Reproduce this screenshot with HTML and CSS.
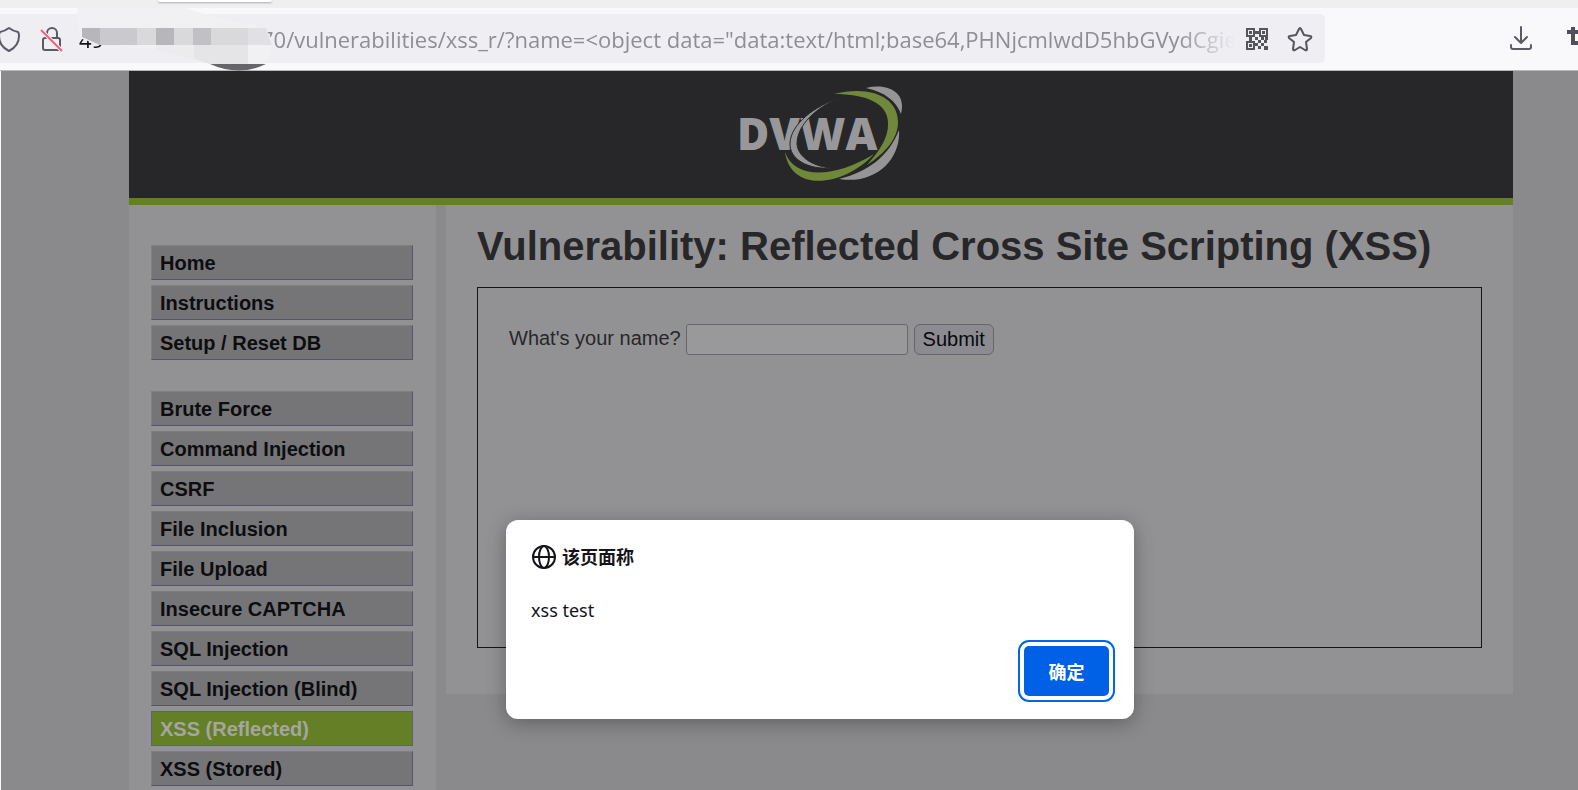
FILE: index.html
```html
<!DOCTYPE html>
<html lang="zh-CN">
<head>
<meta charset="utf-8">
<title>Vulnerability: Reflected Cross Site Scripting (XSS)</title>
<link rel="stylesheet" href="styles.css">
</head>
<body>
<div class="browser">
  <div class="tabstrip"><div class="tab"></div></div>
  <div class="toolbar">
    <div class="urlbar">
      <svg class="shield" width="22" height="26" viewBox="0 0 22 26" fill="none" stroke="#5b5b66" stroke-width="2" stroke-linejoin="round"><path d="M9 2Q13 5 18 6Q19 7 19 10Q19 20 9 25Q-1 20 -1 10Q-1 7 0 6Q5 5 9 2Z"/></svg>
      <svg class="lock" width="24" height="26" viewBox="0 0 24 26" fill="none" stroke="#5b5b66" stroke-width="2"><rect x="3" y="12" width="17" height="12" rx="2"/><path d="M7 12V7a5 5 0 0 1 10 0v5"/><path d="M1 4L22 25" stroke="#efeef3" stroke-width="4"/><path d="M1 4L22 25" stroke="#f0637d" stroke-width="2"/></svg>
      <div class="url"><span class="host">49</span><span class="path">70/vulnerabilities/xss_r/?name=&lt;object data="data:text/html;base64,PHNjcmlwdD5hbGVydCgie</span></div>
      <button class="icon" aria-label="QR code"><svg width="24" height="24" viewBox="0 0 24 24" fill="#55555c"><path fill-rule="evenodd" d="M1 1h9v9H1zM3 3v5h5V3zM14 1h9v9h-9zM16 3v5h5V3zM1 14h9v9H1zM3 16v5h5v-5z"/><path d="M4 4h3v3H4zM17 4h3v3h-3zM4 17h3v3H4zM10 4h4v3h-4zM4 10h3v4H4zM10 10h3v3h-3zM13 13h3v3h-3zM16 10h3v3h-3zM19 13h3v3h-3zM10 16h3v3h-3zM16 16h3v3h-3zM13 19h3v3h-3zM19 19h4v4h-4zM20 10h3v3h-3z"/></svg></button>
      <button class="icon" aria-label="Bookmark"><svg width="26" height="26" viewBox="0 0 26 26" fill="none" stroke="#55555c" stroke-width="2" stroke-linejoin="round"><path d="M12 3Q13 1 14 3L17 9L23 10Q25 10 24 12L19 16L20 23Q20 25 18 24L13 21L8 24Q6 25 6 23L7 16L2 12Q1 10 3 10L9 9Z"/></svg></button>
    </div>
    <div class="actions">
      <button class="icon" aria-label="Downloads"><svg width="24" height="26" viewBox="0 0 24 26" fill="none" stroke="#5b5b66" stroke-width="2" stroke-linecap="round" stroke-linejoin="round"><path d="M12 1V16M6 11L12 17L18 11M2 19V21Q2 23 4 23H20Q22 23 22 21V19"/></svg></button>
      <button class="icon crop" aria-label="Screenshot"><svg width="24" height="24" viewBox="0 0 24 24" fill="none" stroke="#50505a" stroke-width="4"><path d="M0 5H17V24M6 0V16H24"/></svg></button>
    </div>
  </div>
  <svg class="mask" width="200" height="64" viewBox="0 0 200 64">
    <path d="M134 56Q163 69 190 56Z" fill="#65656a"/>
    <path d="M2 0H110Q150 14 180 17Q196 23 196 36Q196 49 186 56H134Q110 48 78 41L24 37L6 31Q-2 14 2 0Z" fill="#f1f1f3"/>
    <path fill="#ececef" d="M80 37H118V52L80 42z"/><path fill="#e5e5e8" d="M118 37H172V56H134L118 51z"/>
    <path fill="#b7b6bb" d="M6 20H24V37L6 29zM80 20H98V37H80z"/><path fill="#c9c9ce" d="M24 20H61V37H24z"/><path fill="#d9d9dc" d="M61 20H80V37H61zM98 20H117V37H98zM135 20H172V37H135z"/><path fill="#c1c1c5" d="M117 20H135V37H117z"/><path fill="#e1e1e5" d="M172 20H190L196 37H172z"/>
  </svg>
</div>

<main class="page">
  <div class="container">
    <header class="header">
      <svg class="logo" width="166" height="96" viewBox="0 0 166 96" role="img" aria-label="DVWA">
        <text x="-1" y="64" class="logo-text">DVWA</text>
        <path d="M104 11C76 20 53 38 52 57C51 73 70 84 94 82C77 81 60 72 59 58C59 39 78 21 104 11Z" fill="#959598" stroke="#272729" stroke-width="1"/>
        <path d="M96 8C132 -1 160 11 160 36C160 53 147 67 129 79C141 65 151 52 150 36C149 17 128 8 96 8Z" fill="#71883a"/>
        <path d="M136 68C107 100 53 108 47 66C57 95 99 91 136 68Z" fill="#71883a"/>
        <path d="M128 2C148 -3 169 5 163 28C158 15 147 6 128 2ZM161 44C163 73 138 99 101 93C130 86 151 70 161 44Z" fill="#959598"/>
      </svg>
    </header>
    <div class="columns">
      <nav class="menu">
        <div class="group"><a href="#">Home</a><a href="#">Instructions</a><a href="#">Setup / Reset DB</a></div>
        <div class="group"><a href="#">Brute Force</a><a href="#">Command Injection</a><a href="#">CSRF</a><a href="#">File Inclusion</a><a href="#">File Upload</a><a href="#">Insecure CAPTCHA</a><a href="#">SQL Injection</a><a href="#">SQL Injection (Blind)</a><a href="#" class="selected">XSS (Reflected)</a><a href="#">XSS (Stored)</a></div>
      </nav>
      <section class="content">
        <h1>Vulnerability: Reflected Cross Site Scripting (XSS)</h1>
        <form class="vuln">
          <label for="name">What's your name?</label>
          <input id="name" type="text">
          <button type="button">Submit</button>
        </form>
      </section>
    </div>
  </div>
</main>

<dialog class="alert" open aria-labelledby="alert-title">
  <div class="alert-head">
    <svg width="24" height="24" viewBox="0 0 24 24" fill="none" stroke="#15141a" stroke-width="2"><circle cx="12" cy="12" r="11"/><ellipse cx="12" cy="12" rx="5" ry="11"/><path d="M1 12H23"/></svg>
    <strong id="alert-title">该页面称</strong>
  </div>
  <p>xss test</p>
  <div class="alert-actions"><button type="button">确定</button></div>
</dialog>
</body>
</html>
```
FILE: styles.css
```css
* { box-sizing: border-box; }
html, body { height: 100%; }
body {
  margin: 0;
  display: flex;
  flex-direction: column;
  overflow: hidden;
  position: relative;
  background: #f9f9fb;
  font-family: "Liberation Sans", Arial, sans-serif;
  font-size: 20px;
}
button { font: inherit; }

.browser { position: relative; flex: none; border-bottom: 1px solid #b5b8b9; }
.tabstrip { height: 8px; background: #efefef; padding-left: 158px; }
.tab { width: 114px; height: 2px; background: #fff; border-radius: 0 0 4px 4px; box-shadow: 0 1px 2px #aaaab4; }
.toolbar { display: flex; padding: 6px 0 7px; overflow: hidden; }
.urlbar {
  display: flex;
  align-items: center;
  flex: 1;
  min-width: 0;
  height: 49px;
  padding-right: 4px;
  background: #efeef3;
  border-radius: 0 5px 5px 0;
}
.shield, .lock { flex: none; }
.lock { margin-left: 18px; }
.url {
  display: flex;
  flex: 1;
  min-width: 0;
  overflow: hidden;
  margin-left: 15px;
  font-family: "Open Sans", "Noto Sans", sans-serif;
  font-size: 22px;
  line-height: 32px;
  white-space: nowrap;
  color: #8e8e94;
  mask-image: linear-gradient(to right, #000 95%, transparent);
}
.host { flex: none; width: 182px; color: #15141a; }
.icon { display: flex; align-items: center; justify-content: center; flex: none; width: 43px; height: 32px; padding: 0; border: 0; background: none; }
.actions { display: flex; align-items: center; flex: none; gap: 25px; margin: 0 -32px 0 174px; }
.crop { justify-content: flex-start; }
.mask { position: absolute; left: 76px; top: 8px; }

.page { flex: 1; min-height: 0; display: flex; margin-left: 1px; padding: 0 65px 0 128px; background: #8a8a8c; }
.container { flex: 1; display: flex; flex-direction: column; }
.header { flex: none; display: flex; justify-content: center; padding: 15px 0 16px; background: #272729; border-bottom: 7px solid #647f25; }
.logo { display: block; }
.logo-text { font-family: "Open Sans", "Noto Sans", sans-serif; font-weight: 800; font-size: 44px; fill: #98989b; }
.columns { flex: 1; display: flex; align-items: flex-start; gap: 10px; }
.menu { align-self: stretch; flex: 0 0 307px; display: flex; flex-direction: column; gap: 31px; padding: 40px 23px 0 22px; background: #929294; }
.group { display: flex; flex-direction: column; gap: 5px; }
.menu a {
  height: 35px;
  padding: 0 8px;
  border: 1px solid;
  border-color: #7f7f81 #55566d #55566d #7f7f81;
  background: #757577;
  color: #0d0d10;
  font-weight: 700;
  line-height: 34px;
  text-decoration: none;
}
.menu .selected { background: #647f25; color: #a4a6a0; border-color: #52657a; }
.content { flex: 1; padding: 17px 31px 46px; background: #929294; color: #272729; }
h1 { margin: 0 0 16px; font-size: 40px; line-height: 49px; white-space: nowrap; }
.vuln { display: flex; align-items: flex-start; min-height: 361px; padding: 36px 31px; border: 1px solid #151517; }
.vuln label { line-height: 28px; margin-right: 5px; }
.vuln input { width: 222px; height: 31px; margin-right: 6px; border: 1px solid #67676f; border-radius: 3px; background: #99999b; font: inherit; }
.vuln button { width: 80px; height: 31px; padding: 0; border: 1px solid #65656d; border-radius: 6px; background: #8b8b90; color: #09090d; }

.alert {
  position: absolute;
  left: calc(50% - 283px);
  top: 520px;
  width: 628px;
  margin: 0;
  padding: 24px 19px 17px 25px;
  border: 0;
  border-radius: 12px;
  background: #fff;
  color: #15141a;
  box-shadow: 0 4px 20px rgba(0, 0, 0, .3);
  font-family: "Noto Sans", "Noto Sans CJK SC", sans-serif;
  font-size: 18px;
}
.alert-head { display: flex; align-items: center; gap: 6px; line-height: 26px; }
.alert-head svg { margin-left: 1px; }
.alert p { margin: 27px 0 17px; line-height: 26px; }
.alert-actions { display: flex; justify-content: flex-end; padding: 6px; }
.alert-actions button {
  width: 85px;
  height: 50px;
  padding: 0;
  border: 0;
  border-radius: 5px;
  background: #0060e6;
  color: #fff;
  font-weight: 700;
  outline: 2px solid #0068e8;
  outline-offset: 4px;
}
```
